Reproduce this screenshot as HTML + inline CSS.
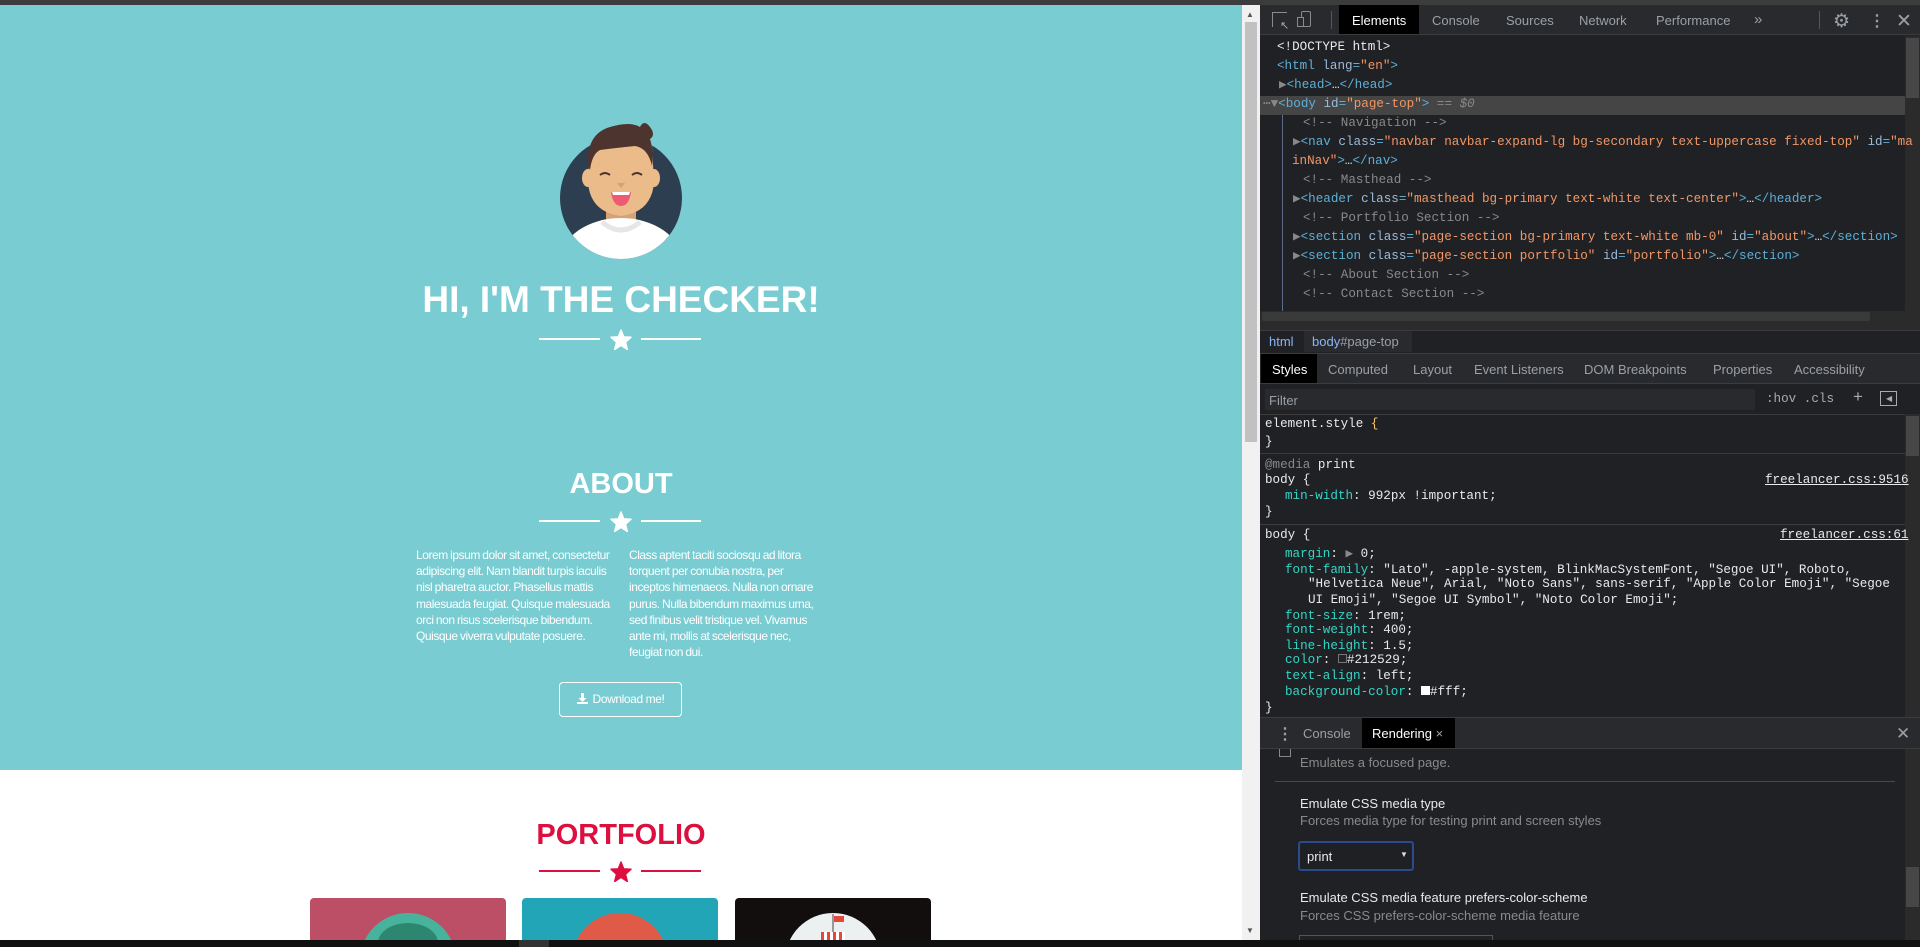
<!DOCTYPE html>
<html><head><meta charset="utf-8"><style>
*{margin:0;padding:0;box-sizing:border-box}
html,body{width:1920px;height:947px;overflow:hidden}
body{background:#202124;font-family:"Liberation Sans",sans-serif;position:relative}
.a{position:absolute;white-space:nowrap}
.m{font-family:"Liberation Mono",monospace;font-size:12.6px;line-height:19px}
.ui{font-size:13px;color:#9aa0a6}
.tag{color:#5db0d7}.at{color:#9bbbdc}.av{color:#f29766}.cm{color:#898989}.pn{color:#35d4c7}.w{color:#e8eaed}
.div{position:absolute;height:2px}
.p{position:absolute;top:547px;font-size:12px;line-height:16.2px;color:#fff;letter-spacing:-0.45px;word-spacing:-0.5px}
</style></head><body>
<div class="a" style="left:0;top:0;width:1920px;height:5px;background:#3c3c3c"></div>
<div class="a" style="left:0;top:5px;width:1242px;height:765px;background:#79cdd2"></div>
<div class="a" style="left:0;top:770px;width:1242px;height:170px;background:#fff"></div>
<div class="a" style="left:1242px;top:5px;width:18px;height:935px;background:#f1f1f1"></div>
<div class="a" style="left:1245px;top:22px;width:12px;height:420px;background:#c1c1c1"></div>
<div class="a" style="left:1246px;top:10px;font-size:8px;color:#555">▲</div>
<div class="a" style="left:1246px;top:926px;font-size:8px;color:#555">▼</div>
<svg class="a" style="left:540px;top:110px" width="170" height="160" viewBox="0 0 170 160">
<defs><clipPath id="c"><circle cx="81" cy="88" r="61"/></clipPath></defs>
<circle cx="81" cy="88" r="61" fill="#2c3e50"/>
<g clip-path="url(#c)">
<rect x="66" y="95" width="30" height="20" fill="#d4a276"/>
<ellipse cx="81" cy="150" rx="60" ry="42" fill="#fff"/>
<path d="M62 112 Q81 128 100 112" stroke="#e6e6e6" stroke-width="5" fill="none"/>
</g>
<path d="M50 36 Q81 18 112 36 L114 72 Q112 102 81 106 Q50 102 48 72 Z" fill="#ebbb8a"/>
<ellipse cx="48" cy="68" rx="6" ry="9" fill="#ebbb8a"/><ellipse cx="114" cy="68" rx="6" ry="9" fill="#ebbb8a"/>
<path d="M48 56 Q46 24 70 17 Q90 11 100 17 Q104 9 110 17 Q116 25 110 29 Q114 42 112 56 Q108 38 95 36 Q75 38 60 40 Q52 44 50 60 Z" fill="#4e342e"/>
<path d="M60 65 Q65 61 70 65 M92 65 Q97 61 102 65" stroke="#4e342e" stroke-width="2" fill="none"/>
<path d="M77 73 L85 73 L81 78 Z" fill="#d4a276"/>
<path d="M71 82 Q81 83 91 82 Q89 96 81 96 Q73 96 71 82 Z" fill="#ed5b72"/>
<path d="M72 82 L90 82 L89 85 L73 85Z" fill="#fff"/>
</svg>
<div class="a" style="left:0;width:1242px;top:278px;text-align:center;font-size:37px;font-weight:bold;color:#fff;line-height:44px">HI, I'M THE CHECKER!</div>
<div class="div" style="left:539px;top:338px;width:61px;background:#fff"></div>
<div class="div" style="left:641px;top:338px;width:60px;background:#fff"></div>
<svg class="a" style="left:610px;top:329px" width="22" height="21" viewBox="0 0 24 23"><path d="M12 1 L15 8.5 L23 9 L17 14.5 L19 22.5 L12 18 L5 22.5 L7 14.5 L1 9 L9 8.5Z" fill="#fff" stroke="#fff" stroke-width="1.5" stroke-linejoin="round"/></svg>
<div class="a" style="left:0;width:1242px;top:466px;text-align:center;font-size:29px;font-weight:bold;color:#fff;line-height:36px">ABOUT</div>
<div class="div" style="left:539px;top:520px;width:61px;background:#fff"></div>
<div class="div" style="left:641px;top:520px;width:60px;background:#fff"></div>
<svg class="a" style="left:610px;top:511px" width="22" height="21" viewBox="0 0 24 23"><path d="M12 1 L15 8.5 L23 9 L17 14.5 L19 22.5 L12 18 L5 22.5 L7 14.5 L1 9 L9 8.5Z" fill="#fff" stroke="#fff" stroke-width="1.5" stroke-linejoin="round"/></svg>
<div class="p" style="left:416px;width:204px">Lorem ipsum dolor sit amet, consectetur<br>adipiscing elit. Nam blandit turpis iaculis<br>nisl pharetra auctor. Phasellus mattis<br>malesuada feugiat. Quisque malesuada<br>orci non risus scelerisque bibendum.<br>Quisque viverra vulputate posuere.</div>
<div class="p" style="left:629px;width:200px">Class aptent taciti sociosqu ad litora<br>torquent per conubia nostra, per<br>inceptos himenaeos. Nulla non ornare<br>purus. Nulla bibendum maximus urna,<br>sed finibus velit tristique vel. Vivamus<br>ante mi, mollis at scelerisque nec,<br>feugiat non dui.</div>
<div class="a" style="left:559px;top:682px;width:123px;height:35px;border:1px solid #fff;border-radius:4px;color:#fff;font-size:12px;line-height:33px;text-align:center;letter-spacing:-0.4px"><svg width="11" height="11" viewBox="0 0 11 11" style="vertical-align:-1px;margin-right:5px"><path d="M4 0h3v5h2.5L5.5 9 1.5 5H4z" fill="#fff"/><rect x="0" y="9" width="11" height="2" fill="#fff"/></svg>Download me!</div>
<div class="a" style="left:0;width:1242px;top:817px;text-align:center;font-size:29px;font-weight:bold;color:#dc0f3f;line-height:36px">PORTFOLIO</div>
<div class="div" style="left:539px;top:870px;width:61px;background:#dc0f3f"></div>
<div class="div" style="left:641px;top:870px;width:60px;background:#dc0f3f"></div>
<svg class="a" style="left:610px;top:861px" width="22" height="21" viewBox="0 0 24 23"><path d="M12 1 L15 8.5 L23 9 L17 14.5 L19 22.5 L12 18 L5 22.5 L7 14.5 L1 9 L9 8.5Z" fill="#dc0f3f" stroke="#dc0f3f" stroke-width="1.5" stroke-linejoin="round"/></svg>
<div class="a" style="left:310px;top:898px;width:196px;height:42px;background:#bc4f66;border-radius:4px 4px 0 0;overflow:hidden"><div style="position:absolute;left:50px;top:15px;width:96px;height:96px;border-radius:50%;background:#48b39c"></div><div style="position:absolute;left:68px;top:25px;width:60px;height:40px;border-radius:50%;background:#2c8670"></div></div>
<div class="a" style="left:522px;top:898px;width:196px;height:42px;background:#22a5b7;border-radius:4px 4px 0 0;overflow:hidden"><div style="position:absolute;left:50px;top:15px;width:96px;height:96px;border-radius:50%;background:#e05a48"></div></div>
<div class="a" style="left:735px;top:898px;width:196px;height:42px;background:#110e0d;border-radius:4px 4px 0 0;overflow:hidden"><div style="position:absolute;left:50px;top:15px;width:96px;height:96px;border-radius:50%;background:#ecf0f1"></div><div style="position:absolute;left:97px;top:16px;width:2px;height:22px;background:#999"></div><div style="position:absolute;left:99px;top:18px;width:10px;height:6px;background:#e14a3a"></div><div style="position:absolute;left:86px;top:34px;width:24px;height:12px;background:repeating-linear-gradient(90deg,#e14a3a 0 3px,#fff 3px 6px)"></div></div>
<!-- devtools -->
<div class="a" style="left:1260px;top:5px;width:660px;height:30px;background:#292a2d;border-bottom:1px solid #3c3c3c"></div>
<div class="a" style="left:1272px;top:12px;width:15px;height:15px;border:1.5px solid #8a8a8a;border-right:none;border-bottom:none"></div>
<div class="a" style="left:1280px;top:19px;color:#aaa;font-size:11px">↖</div>
<div class="a" style="left:1301px;top:11px;width:10px;height:16px;border:1.5px solid #8a8a8a;border-radius:2px"></div>
<div class="a" style="left:1297px;top:17px;width:7px;height:10px;border:1.5px solid #8a8a8a;background:#292a2d"></div>
<div class="a" style="left:1331px;top:11px;width:1px;height:18px;background:#555"></div>
<div class="a" style="left:1339px;top:5px;width:80px;height:29px;background:#000"></div>
<div class="a ui" style="left:1352px;top:13px;color:#fff">Elements</div>
<div class="a ui" style="left:1432px;top:13px">Console</div>
<div class="a ui" style="left:1506px;top:13px">Sources</div>
<div class="a ui" style="left:1579px;top:13px">Network</div>
<div class="a ui" style="left:1656px;top:13px">Performance</div>
<div class="a ui" style="left:1754px;top:11px;font-size:15px">»</div>
<div class="a" style="left:1819px;top:11px;width:1px;height:18px;background:#555"></div>
<div class="a" style="left:1833px;top:10px;font-size:19px;color:#9aa0a6">⚙</div>
<div class="a" style="left:1869px;top:11px;font-size:16px;color:#9aa0a6;font-weight:bold">⋮</div>
<div class="a" style="left:1896px;top:10px;font-size:19px;color:#9aa0a6">✕</div>
<div class="a" style="left:1260px;top:96px;width:645px;height:19px;background:#454545"></div>
<div class="a" style="left:1282px;top:115px;width:1px;height:203px;background:#5d6b8a"></div>
<div class="a" style="left:1905px;top:36px;width:15px;height:282px;background:#2b2b2b"></div>
<div class="a" style="left:1906px;top:38px;width:13px;height:60px;background:#474747"></div>
<div class="a m" style="left:1277px;top:38px"><span class="w">&lt;!DOCTYPE html&gt;</span></div>
<div class="a m" style="left:1277px;top:57px"><span class="tag">&lt;html</span> <span class="at">lang</span><span class="tag">=</span><span class="av">"en"</span><span class="tag">&gt;</span></div>
<div class="a m" style="left:1279px;top:76px"><span class="cm">▶</span><span class="tag">&lt;head&gt;</span><span class="w">…</span><span class="tag">&lt;/head&gt;</span></div>
<div class="a m" style="left:1263px;top:95px"><span class="cm">⋯▼</span><span class="tag">&lt;body</span> <span class="at">id</span><span class="tag">=</span><span class="av">"page-top"</span><span class="tag">&gt;</span> <span class="cm">== <i>$0</i></span></div>
<div class="a m cm" style="left:1303px;top:114px">&lt;!-- Navigation --&gt;</div>
<div class="a m" style="left:1293px;top:133px"><span class="cm">▶</span><span class="tag">&lt;nav</span> <span class="at">class</span><span class="tag">=</span><span class="av">"navbar navbar-expand-lg bg-secondary text-uppercase fixed-top"</span> <span class="at">id</span><span class="tag">=</span><span class="av">"ma</span></div>
<div class="a m" style="left:1292px;top:152px"><span class="av">inNav"</span><span class="tag">&gt;</span><span class="w">…</span><span class="tag">&lt;/nav&gt;</span></div>
<div class="a m cm" style="left:1303px;top:171px">&lt;!-- Masthead --&gt;</div>
<div class="a m" style="left:1293px;top:190px"><span class="cm">▶</span><span class="tag">&lt;header</span> <span class="at">class</span><span class="tag">=</span><span class="av">"masthead bg-primary text-white text-center"</span><span class="tag">&gt;</span><span class="w">…</span><span class="tag">&lt;/header&gt;</span></div>
<div class="a m cm" style="left:1303px;top:209px">&lt;!-- Portfolio Section --&gt;</div>
<div class="a m" style="left:1293px;top:228px"><span class="cm">▶</span><span class="tag">&lt;section</span> <span class="at">class</span><span class="tag">=</span><span class="av">"page-section bg-primary text-white mb-0"</span> <span class="at">id</span><span class="tag">=</span><span class="av">"about"</span><span class="tag">&gt;</span><span class="w">…</span><span class="tag">&lt;/section&gt;</span></div>
<div class="a m" style="left:1293px;top:247px"><span class="cm">▶</span><span class="tag">&lt;section</span> <span class="at">class</span><span class="tag">=</span><span class="av">"page-section portfolio"</span> <span class="at">id</span><span class="tag">=</span><span class="av">"portfolio"</span><span class="tag">&gt;</span><span class="w">…</span><span class="tag">&lt;/section&gt;</span></div>
<div class="a m cm" style="left:1303px;top:266px">&lt;!-- About Section --&gt;</div>
<div class="a m cm" style="left:1303px;top:285px">&lt;!-- Contact Section --&gt;</div>
<div class="a" style="left:1260px;top:311px;width:660px;height:19px;background:#2b2b2b"></div>
<div class="a" style="left:1262px;top:312px;width:608px;height:9px;background:#3a3a3a;border-radius:2px"></div>
<div class="a" style="left:1260px;top:330px;width:660px;height:22px;background:#202124;border-top:1px solid #3c3c3c"></div>
<div class="a" style="left:1304px;top:331px;width:108px;height:21px;background:#292a2d"></div>
<div class="a ui" style="left:1269px;top:334px;color:#8ab4f8">html</div>
<div class="a ui" style="left:1312px;top:334px;color:#8ab4f8">body<span style="color:#9aa0a6">#page-top</span></div>
<div class="a" style="left:1260px;top:353px;width:660px;height:31px;background:#292a2d;border-top:1px solid #3c3c3c;border-bottom:1px solid #3c3c3c"></div>
<div class="a" style="left:1261px;top:354px;width:56px;height:29px;background:#000"></div>
<div class="a ui" style="left:1272px;top:362px;color:#fff">Styles</div>
<div class="a ui" style="left:1328px;top:362px">Computed</div>
<div class="a ui" style="left:1413px;top:362px">Layout</div>
<div class="a ui" style="left:1474px;top:362px">Event Listeners</div>
<div class="a ui" style="left:1584px;top:362px">DOM Breakpoints</div>
<div class="a ui" style="left:1713px;top:362px">Properties</div>
<div class="a ui" style="left:1794px;top:362px">Accessibility</div>
<div class="a" style="left:1265px;top:389px;width:490px;height:21px;background:#292a2d"></div>
<div class="a ui" style="left:1269px;top:393px">Filter</div>
<div class="a m" style="left:1766px;top:390px;color:#aaa">:hov .cls</div>
<div class="a" style="left:1853px;top:387px;color:#aaa;font-size:17px">+</div>
<div class="a" style="left:1880px;top:391px;width:17px;height:15px;border:1px solid #aaa"></div>
<div class="a" style="left:1886px;top:394px;font-size:8px;color:#aaa">◀</div>
<div class="a" style="left:1260px;top:414px;width:645px;height:1px;background:#3c3c3c"></div>
<div class="a" style="left:1905px;top:414px;width:15px;height:303px;background:#2b2b2b"></div>
<div class="a" style="left:1906px;top:416px;width:13px;height:40px;background:#474747"></div>
<div class="a m w" style="left:1265px;top:415px">element.style <span style="color:#f9ca6b">{</span></div>
<div class="a m w" style="left:1265px;top:433px">}</div>
<div class="a" style="left:1260px;top:453px;width:645px;height:1px;background:#3c3c3c"></div>
<div class="a m w" style="left:1265px;top:456px"><span class="cm">@media</span> print</div>
<div class="a m w" style="left:1265px;top:471px">body {</div>
<div class="a m" style="left:1765px;top:471px;color:#e8eaed;text-decoration:underline">freelancer.css:9516</div>
<div class="a m" style="left:1285px;top:487px"><span class="pn">min-width</span><span class="w">: 992px !important;</span></div>
<div class="a m w" style="left:1265px;top:503px">}</div>
<div class="a" style="left:1260px;top:524px;width:645px;height:1px;background:#3c3c3c"></div>
<div class="a m w" style="left:1265px;top:526px">body {</div>
<div class="a m" style="left:1780px;top:526px;color:#e8eaed;text-decoration:underline">freelancer.css:61</div>
<div class="a m" style="left:1285px;top:545px"><span class="pn">margin</span><span class="w">: <span class="cm">▶</span> 0;</span></div>
<div class="a m" style="left:1285px;top:561px"><span class="pn">font-family</span><span class="w">: "Lato", -apple-system, BlinkMacSystemFont, "Segoe UI", Roboto,</span></div>
<div class="a m w" style="left:1308px;top:575px">"Helvetica Neue", Arial, "Noto Sans", sans-serif, "Apple Color Emoji", "Segoe</div>
<div class="a m w" style="left:1308px;top:591px">UI Emoji", "Segoe UI Symbol", "Noto Color Emoji";</div>
<div class="a m" style="left:1285px;top:607px"><span class="pn">font-size</span><span class="w">: 1rem;</span></div>
<div class="a m" style="left:1285px;top:621px"><span class="pn">font-weight</span><span class="w">: 400;</span></div>
<div class="a m" style="left:1285px;top:637px"><span class="pn">line-height</span><span class="w">: 1.5;</span></div>
<div class="a m" style="left:1285px;top:651px"><span class="pn">color</span><span class="w">: <span style="display:inline-block;width:9px;height:9px;border:1px solid #777;background:#212529"></span>#212529;</span></div>
<div class="a m" style="left:1285px;top:667px"><span class="pn">text-align</span><span class="w">: left;</span></div>
<div class="a m" style="left:1285px;top:683px"><span class="pn">background-color</span><span class="w">: <span style="display:inline-block;width:9px;height:9px;background:#fff"></span>#fff;</span></div>
<div class="a m w" style="left:1265px;top:699px">}</div>
<div class="a" style="left:1260px;top:717px;width:660px;height:32px;background:#292a2d;border-top:1px solid #3c3c3c;border-bottom:1px solid #3c3c3c"></div>
<div class="a" style="left:1277px;top:724px;color:#9aa0a6;font-size:16px;font-weight:bold">⋮</div>
<div class="a ui" style="left:1303px;top:726px">Console</div>
<div class="a" style="left:1362px;top:718px;width:93px;height:30px;background:#000"></div>
<div class="a ui" style="left:1372px;top:726px;color:#fff">Rendering <span style="color:#9aa0a6">×</span></div>
<div class="a" style="left:1896px;top:724px;font-size:17px;color:#9aa0a6">✕</div>
<div class="a" style="left:1279px;top:749px;width:12px;height:8px;border:1px solid #888;border-top:none"></div>
<div class="a ui" style="left:1300px;top:755px;color:#8a8a8a">Emulates a focused page.</div>
<div class="a" style="left:1275px;top:781px;width:620px;height:1px;background:#4a4a4a"></div>
<div class="a ui" style="left:1300px;top:796px;color:#e8eaed">Emulate CSS media type</div>
<div class="a ui" style="left:1300px;top:813px;color:#8a8a8a">Forces media type for testing print and screen styles</div>
<div class="a" style="left:1298px;top:841px;width:116px;height:30px;border:2px solid #2a4b8d;border-radius:3px;background:#1f2023"></div>
<div class="a ui" style="left:1307px;top:849px;color:#e8eaed">print</div>
<div class="a" style="left:1400px;top:850px;font-size:8px;color:#ddd">▼</div>
<div class="a ui" style="left:1300px;top:890px;color:#e8eaed">Emulate CSS media feature prefers-color-scheme</div>
<div class="a ui" style="left:1300px;top:908px;color:#8a8a8a">Forces CSS prefers-color-scheme media feature</div>
<div class="a" style="left:1299px;top:935px;width:194px;height:5px;border:1px solid #555;border-bottom:none"></div>
<div class="a" style="left:1905px;top:749px;width:15px;height:191px;background:#2b2b2b"></div>
<div class="a" style="left:1906px;top:867px;width:13px;height:40px;background:#474747"></div>
<div class="a" style="left:0;top:940px;width:1920px;height:7px;background:#111"></div>
<div class="a" style="left:519px;top:940px;width:30px;height:7px;background:#333"></div>
</body></html>
